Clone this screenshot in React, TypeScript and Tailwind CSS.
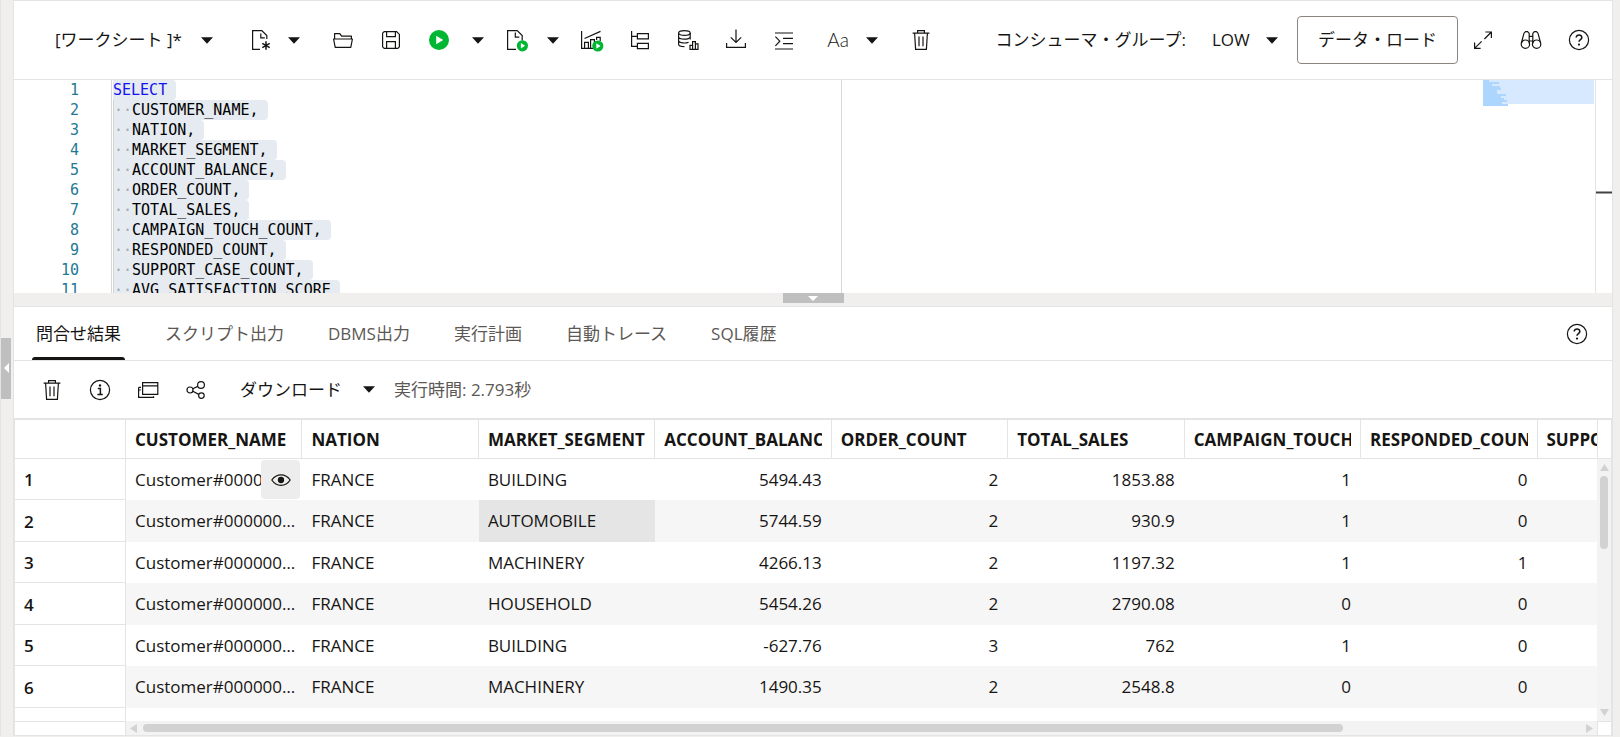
import React from 'react';

interface IconProps {
  className?: string;
  children: React.ReactNode;
}

const Icon: React.FC<IconProps> = ({ className = 'h-6 w-6', children }) => (
  <svg
    viewBox="0 0 24 24"
    fill="none"
    stroke="currentColor"
    strokeWidth="1.2"
    className={`${className} shrink-0`}
    aria-hidden="true"
  >
    {children}
  </svg>
);

const Caret: React.FC<{ className?: string }> = ({ className = '' }) => (
  <svg viewBox="0 0 12 7" className={`h-[7px] w-3 shrink-0 ${className}`} fill="currentColor" aria-hidden="true">
    <path d="M0 0.3h12L6 6.7z" />
  </svg>
);

const NewFileIcon = () => (
  <Icon>
    <path d="M11 21.4H3.6V2.6h9.2l5 5V11M11.8 5.5v4.3h4" />
    <path d="M17 13.2v8.6M13.3 15.3l7.4 4.4M20.700 15.3l-7.4 4.4" strokeWidth="1.5" />
  </Icon>
);

const FolderIcon = () => (
  <Icon>
    <path d="M3.6 11V5.6h5.2l1.8 2.6h9.8V11M2.6 11h18.8l-1.6 8.4H4.2z" strokeLinejoin="round" />
  </Icon>
);

const SaveIcon = () => (
  <Icon>
    <path d="M3.6 5.2L5.2 3.6h12.4l2.8 2.8v12.4l-1.6 1.6H5.2l-1.6-1.6z" />
    <path d="M7.6 3.6v5h8.8v-5M7.6 20.4v-6.8h8.8v6.8" />
  </Icon>
);

const RunIcon = () => (
  <Icon>
    <circle cx="12" cy="12" r="10" fill="#00b633" stroke="none" />
    <path d="M9.2 7.8v8.4l7-4.2z" fill="#fff" stroke="none" />
  </Icon>
);

const RunScriptIcon = () => (
  <Icon>
    <path d="M11 21.4H2.6V2.6h9.6l5 5v5M10.3 4.5v4.7h4" />
    <circle cx="17.4" cy="17.8" r="5.6" fill="#00b633" stroke="none" />
    <path d="M15.9 15.1v5.4l4.2-2.7z" fill="#fff" stroke="none" />
  </Icon>
);

const AutotraceIcon = () => (
  <Icon>
    <path d="M1.6 3v17.4H13M4.5 10.5L20.5 3.4M4.6 20.4v-6h3.8v6M10.6 20.4v-8.8h3.8v4M16.6 12V9.4h3.6V13" />
    <circle cx="17.8" cy="18" r="5.6" fill="#00b633" stroke="none" />
    <path d="M16.3 15.3v5.4l4.2-2.7z" fill="#fff" stroke="none" />
  </Icon>
);

const PlanIcon = () => (
  <Icon>
    <path d="M3.6 3v15.4h5.8M3.6 8.4h5.8M9.4 5.6h11v5.2h-11zM9.4 15.4h11v5.2h-11z" />
  </Icon>
);

const DatabaseIcon = () => (
  <Icon>
    <ellipse cx="8.4" cy="5" rx="5.8" ry="2.4" />
    <path d="M2.6 5v11.2c0 1.4 2.6 2.4 5.8 2.4M14.2 5v6.4M2.6 8.8c0 3.2 11.6 3.2 11.6 0M2.6 12.6c0 2.6 7 3 10 1.6" />
    <path d="M14 21.4v-4h2.6v-3.8h2.8v2.2H22v5.6zM16.6 17.4v4M19.4 15.8v5.6" />
  </Icon>
);

const DownloadIcon = () => (
  <Icon>
    <path d="M12 1.6v12.6M6.8 9.4L12 14.4l5.2-5M2.6 15v4.4h18.8V15" />
  </Icon>
);

const IndentIcon = () => (
  <Icon>
    <path d="M3 5h18M11 10.400h10M11 15.600h10M3 21h18M3.4 8.6l4.4 4.6-4.4 4.6" />
  </Icon>
);

const TrashIcon = () => (
  <Icon>
    <path d="M3.6 5.2h16.8M8.6 5.2V2.6h6.8v2.6M5.6 5.2l1 16.2h10.8l1-16.2M10 8.4v9.8M14 8.4v9.8" />
  </Icon>
);

const ExpandIcon = () => (
  <Icon>
    <path d="M14.4 4h6v6M20.4 4l-7 7M9.6 20.4h-6v-6M3.6 20.4l7-7" />
  </Icon>
);

const BinocularsIcon = () => (
  <Icon>
    <circle cx="6.4" cy="16.2" r="4.2" />
    <circle cx="17.6" cy="16.2" r="4.2" />
    <path d="M2.4 15L5 5.2l1.6-1.6h2l1.6 1.8v10M21.6 15L19 5.2l-1.6-1.6h-2l-1.6 1.8v10M10.2 8.4h3.6M10.2 13h3.6" />
  </Icon>
);

const HelpIcon = () => (
  <Icon>
    <circle cx="12" cy="12" r="9.6" />
    <path d="M9.2 9.6c0-3.6 5.8-3.4 5.6 0-.1 2-2.8 2-2.8 4.2" strokeWidth="1.6" />
    <circle cx="12" cy="16.6" r="1.1" fill="currentColor" stroke="none" />
  </Icon>
);

const InfoIcon = () => (
  <Icon>
    <circle cx="12" cy="12" r="9.6" />
    <path d="M9.8 10.6h2.6v6M9.4 16.6h5.4" strokeWidth="1.5" />
    <circle cx="12" cy="7.5" r="1.2" fill="currentColor" stroke="none" />
  </Icon>
);

const WindowsIcon = () => (
  <Icon>
    <path d="M6.6 4.6h15.2v11.8H6.6zM6.6 7.8h15.2M5 9.4H2.600M2.6 9.4v10h15v-1.200M2.6 12h2.2" />
  </Icon>
);

const ShareIcon = () => (
  <Icon>
    <circle cx="6" cy="12" r="3" />
    <circle cx="17" cy="7" r="3.4" />
    <circle cx="17.4" cy="17.6" r="2.8" />
    <path d="M8.8 10.8l5-2.4M8.8 13.2l6 3.2" />
  </Icon>
);

const EyeIcon = () => (
  <Icon className="h-5 w-5">
    <path d="M1 12C6.5 3.6 17.5 3.6 23 12 17.5 20.4 6.5 20.4 1 12z" strokeWidth="1.5" />
    <circle cx="12" cy="12" r="3.8" fill="currentColor" stroke="none" />
  </Icon>
);

interface IconButtonProps {
  label: string;
  className?: string;
  children: React.ReactNode;
}

const IconButton: React.FC<IconButtonProps> = ({ label, className = '', children }) => (
  <button aria-label={label} className={`flex h-12 w-12 shrink-0 items-center justify-center ${className}`}>
    {children}
  </button>
);

const CaretButton: React.FC<{ label: string; className?: string }> = ({ label, className = '' }) => (
  <button aria-label={label} className={`flex h-12 w-3 shrink-0 items-center justify-center ${className}`}>
    <Caret />
  </button>
);

const WorksheetToolbar = () => (
  <header className="flex h-[79px] shrink-0 items-center border-b border-[#e4e4e4] pr-[9px] pl-[41px]">
    <button className="flex w-[158px] shrink-0 items-center justify-between whitespace-nowrap">
      [ワークシート ]*
      <Caret />
    </button>
    <IconButton label="新規" className="ml-6"><NewFileIcon /></IconButton>
    <CaretButton label="新規メニュー" className="ml-[3px]" />
    <IconButton label="開く" className="ml-[19px]"><FolderIcon /></IconButton>
    <IconButton label="保存"><SaveIcon /></IconButton>
    <IconButton label="文の実行"><RunIcon /></IconButton>
    <CaretButton label="実行メニュー" className="ml-[9px]" />
    <IconButton label="スクリプトの実行" className="ml-[9px]"><RunScriptIcon /></IconButton>
    <CaretButton label="スクリプトメニュー" className="ml-1.5" />
    <IconButton label="自動トレース" className="ml-[9px]"><AutotraceIcon /></IconButton>
    <IconButton label="実行計画"><PlanIcon /></IconButton>
    <IconButton label="データベース"><DatabaseIcon /></IconButton>
    <IconButton label="ファイルのダウンロード"><DownloadIcon /></IconButton>
    <IconButton label="書式設定"><IndentIcon /></IconButton>
    <button aria-label="大文字小文字の切替え" className="ml-1.5 h-12 w-12 shrink-0 font-['Lato','Noto_Sans_CJK_JP',sans-serif] text-[19px] font-light">
      Aa
    </button>
    <CaretButton label="大文字小文字メニュー" className="ml-1" />
    <IconButton label="クリア" className="ml-[19px]"><TrashIcon /></IconButton>
    <div className="ml-auto flex shrink-0 items-center">
      <label htmlFor="consumer-group" className="mr-[26px] whitespace-nowrap">コンシューマ・グループ:</label>
      <div className="relative mr-[19px] flex items-center">
        <select id="consumer-group" className="w-[66px] appearance-none bg-transparent">
          <option>LOW</option>
        </select>
        <Caret className="pointer-events-none absolute right-0" />
      </div>
      <button className="mr-px h-12 w-[161px] rounded border border-[#8b8580]">データ・ロード</button>
      <IconButton label="最大化"><ExpandIcon /></IconButton>
      <IconButton label="ツアー"><BinocularsIcon /></IconButton>
      <IconButton label="ヘルプ"><HelpIcon /></IconButton>
    </div>
  </header>
);

const codeLines = [
  'CUSTOMER_NAME,',
  'NATION,',
  'MARKET_SEGMENT,',
  'ACCOUNT_BALANCE,',
  'ORDER_COUNT,',
  'TOTAL_SALES,',
  'CAMPAIGN_TOUCH_COUNT,',
  'RESPONDED_COUNT,',
  'SUPPORT_CASE_COUNT,',
  'AVG_SATISFACTION_SCORE',
];

const Minimap = () => (
  <svg viewBox="0 0 111 26" className="h-[26px] w-[111px] shrink-0" shapeRendering="crispEdges" aria-hidden="true">
    <path d="M0 0h111v24H0z" fill="#d6e9ff" />
    <path
      d="M0 0h6v2h10v2H9v2h8v2h1v2h-4v4h9v2h-5v2h3v2h3v2h-5v2h6v2H0z"
      fill="#add6ff"
    />
  </svg>
);

const Editor = () => (
  <section className="flex h-[213px] shrink-0 overflow-hidden">
    <div className="w-[97px] shrink-0 pr-8 text-right font-['DejaVu_Sans_Mono','Noto_Sans_CJK_JP',monospace] text-[15px] leading-5 text-[#237893]">
      {[...codeLines, ''].map((_, i) => (
        <div key={i}>{i + 1}</div>
      ))}
    </div>
    <div className="w-[731px] shrink-0 border-r border-l border-[#d8d8d8] pl-px font-['DejaVu_Sans_Mono','Noto_Sans_CJK_JP',monospace] text-[15px] leading-5 text-black">
      <div className="w-fit rounded-r bg-[#e5ebf1] pr-[9px] text-[#1414f0]">SELECT</div>
      {codeLines.map((line) => (
        <div key={line} className="w-fit rounded-r border-l border-[#d3d3d3] bg-[#e5ebf1] pr-[9px] whitespace-nowrap">
          <span className="text-[#a4a9ae]">··</span>
          {line}
        </div>
      ))}
    </div>
    <div className="ml-auto flex shrink-0">
      <Minimap />
      <div className="ml-px w-[17px] border-l border-[#e4e4e4] pt-[111px]">
        <div className="h-[3px] border-y border-[#a0a0a0] bg-[#424242]" />
      </div>
    </div>
  </section>
);

const tabs = ['問合せ結果', 'スクリプト出力', 'DBMS出力', '実行計画', '自動トレース', 'SQL履歴'];

const ResultTabs = () => (
  <nav className="flex h-[54px] shrink-0 items-stretch border-b border-[#e4e4e4] pr-[11px] pl-[18px]">
    <div role="tablist" className="flex gap-9">
      {tabs.map((tab, i) => (
        <button
          key={tab}
          role="tab"
          aria-selected={i === 0}
          className={`relative px-1 whitespace-nowrap ${i === 0 ? '' : 'text-[#5c5855]'}`}
        >
          {tab}
          {i === 0 && <span className="absolute inset-x-0 bottom-0 h-[3px] rounded-t bg-[#161513]" />}
        </button>
      ))}
    </div>
    <IconButton label="ヘルプ" className="ml-auto self-center"><HelpIcon /></IconButton>
  </nav>
);

const ResultToolbar = () => (
  <div className="flex h-[57px] shrink-0 items-center pl-3.5">
    <IconButton label="クリア"><TrashIcon /></IconButton>
    <IconButton label="情報"><InfoIcon /></IconButton>
    <IconButton label="新規ウィンドウで開く"><WindowsIcon /></IconButton>
    <IconButton label="共有"><ShareIcon /></IconButton>
    <button className="ml-5 flex w-[135px] shrink-0 items-center justify-between whitespace-nowrap">
      ダウンロード
      <Caret />
    </button>
    <span className="ml-[19px] whitespace-nowrap text-[#5c5855]">実行時間: 2.793秒</span>
  </div>
);

const columns = [
  'CUSTOMER_NAME',
  'NATION',
  'MARKET_SEGMENT',
  'ACCOUNT_BALANCE',
  'ORDER_COUNT',
  'TOTAL_SALES',
  'CAMPAIGN_TOUCH_COUNT',
  'RESPONDED_COUNT',
  'SUPPORT_CASE_COUNT',
];

const rows = [
  ['Customer#000000001', 'FRANCE', 'BUILDING', '5494.43', '2', '1853.88', '1', '0', ''],
  ['Customer#000000002', 'FRANCE', 'AUTOMOBILE', '5744.59', '2', '930.9', '1', '0', ''],
  ['Customer#000000003', 'FRANCE', 'MACHINERY', '4266.13', '2', '1197.32', '1', '1', ''],
  ['Customer#000000004', 'FRANCE', 'HOUSEHOLD', '5454.26', '2', '2790.08', '0', '0', ''],
  ['Customer#000000005', 'FRANCE', 'BUILDING', '-627.76', '3', '762', '1', '0', ''],
  ['Customer#000000006', 'FRANCE', 'MACHINERY', '1490.35', '2', '2548.8', '0', '0', ''],
];

const ResultGrid = () => (
  <div className="flex min-h-0 flex-1 flex-col border-t-2 border-b border-l border-[#e4e4e4]">
    <div className="flex min-h-0 flex-1">
      <div className="min-w-0 flex-1 overflow-hidden">
        <table className="w-[1699px] table-fixed border-separate border-spacing-0">
          <thead>
            <tr className="h-[39px]">
              <th className="w-[111px] border-r border-b border-[#e4e4e4]" />
              {columns.map((name) => (
                <th key={name} className="border-r border-b border-[#e4e4e4] px-[9px] pt-0.5 pb-0 text-left font-bold">
                  <div className="overflow-hidden whitespace-nowrap">{name}</div>
                </th>
              ))}
            </tr>
          </thead>
          <tbody>
            {rows.map((row, r) => (
              <tr key={r} className="odd:h-[41px] even:h-[42px] even:bg-[#f6f6f6]">
                <th className="border-r border-b border-[#e4e4e4] bg-white pt-0.5 pb-0 pl-[9px] text-left font-semibold">{r + 1}</th>
                {row.map((value, c) => (
                  <td
                    key={c}
                    className={`relative py-0 pl-[9px] ${c > 2 ? 'pr-2.5 text-right' : 'pr-1'} ${r === 1 && c === 2 ? 'bg-[#e5e5e5]' : ''}`}
                  >
                    <div className="truncate">{value}</div>
                    {r === 0 && c === 0 && (
                      <button
                        aria-label="値の表示"
                        className="absolute top-px right-0.5 flex h-[39px] w-[39px] items-center justify-center rounded bg-[#ededed]"
                      >
                        <EyeIcon />
                      </button>
                    )}
                  </td>
                ))}
              </tr>
            ))}
            <tr className="h-[41px]">
              <th className="border-r border-[#e4e4e4]" />
            </tr>
          </tbody>
        </table>
      </div>
      <div className="flex w-[15px] shrink-0 flex-col border-r border-[#e4e4e4]">
        <div className="h-[39px] border-b border-l border-[#e4e4e4]" />
        <div className="flex flex-1 flex-col items-center bg-[#f3f3f3] py-[5px] text-[#d2d2d2]">
          <svg viewBox="0 0 9 7" className="h-[7px] w-[9px]" fill="currentColor" aria-hidden="true">
            <path d="M4.5 0L9 7H0z" />
          </svg>
          <div className="mt-[5px] h-[73px] w-2 rounded-full bg-[#d2d2d2]" />
          <svg viewBox="0 0 9 7" className="mt-auto h-[7px] w-[9px]" fill="currentColor" aria-hidden="true">
            <path d="M4.5 7L9 0H0z" />
          </svg>
        </div>
      </div>
    </div>
    <div className="flex h-3.5 shrink-0">
      <div className="w-[111px] shrink-0 border-t border-r border-[#e4e4e4]" />
      <div className="flex flex-1 items-center bg-[#f3f3f3] px-1 text-[#d2d2d2]">
        <svg viewBox="0 0 7 9" className="h-[9px] w-[7px]" fill="currentColor" aria-hidden="true">
          <path d="M0 4.5L7 0v9z" />
        </svg>
        <div className="ml-1.5 h-2 w-[82%] rounded-full bg-[#d2d2d2]" />
        <svg viewBox="0 0 7 9" className="ml-auto h-[9px] w-[7px]" fill="currentColor" aria-hidden="true">
          <path d="M7 4.5L0 0v9z" />
        </svg>
      </div>
      <div className="w-[15px] shrink-0 border border-b-0 border-[#e4e4e4]" />
    </div>
  </div>
);

const App = () => (
  <div className="flex h-screen overflow-hidden bg-[#f0efed] pb-px font-['Open_Sans','Noto_Sans_CJK_JP',sans-serif] text-[17px] leading-6 text-[#161513]">
    <div className="flex w-[13px] shrink-0 items-center border-l border-[#e4e4e4]">
      <button aria-label="ナビゲータを開く" className="flex h-[61px] w-2.5 items-center justify-center bg-[#bfbfbf] text-white">
        <svg viewBox="0 0 5 10" className="h-2.5 w-[5px]" fill="currentColor" aria-hidden="true">
          <path d="M0 5L5 0v10z" />
        </svg>
      </button>
    </div>
    <main className="flex min-w-0 flex-1 flex-col border-t border-r border-l border-[#e4e4e4]">
      <div className="flex shrink-0 flex-col bg-white">
        <WorksheetToolbar />
        <Editor />
      </div>
      <div className="flex h-[13px] shrink-0 items-start justify-center">
        <button aria-label="結果を閉じる" className="flex h-2.5 w-[61px] items-center justify-center bg-[#bfbfbf] text-white">
          <svg viewBox="0 0 10 5" className="h-[5px] w-2.5" fill="currentColor" aria-hidden="true">
            <path d="M0 0h10L5 5z" />
          </svg>
        </button>
      </div>
      <section className="flex min-h-0 flex-1 flex-col border-t border-[#e4e4e4] bg-white">
        <ResultTabs />
        <ResultToolbar />
        <ResultGrid />
      </section>
    </main>
    <div className="w-[7px] shrink-0" />
  </div>
);

export default App;
